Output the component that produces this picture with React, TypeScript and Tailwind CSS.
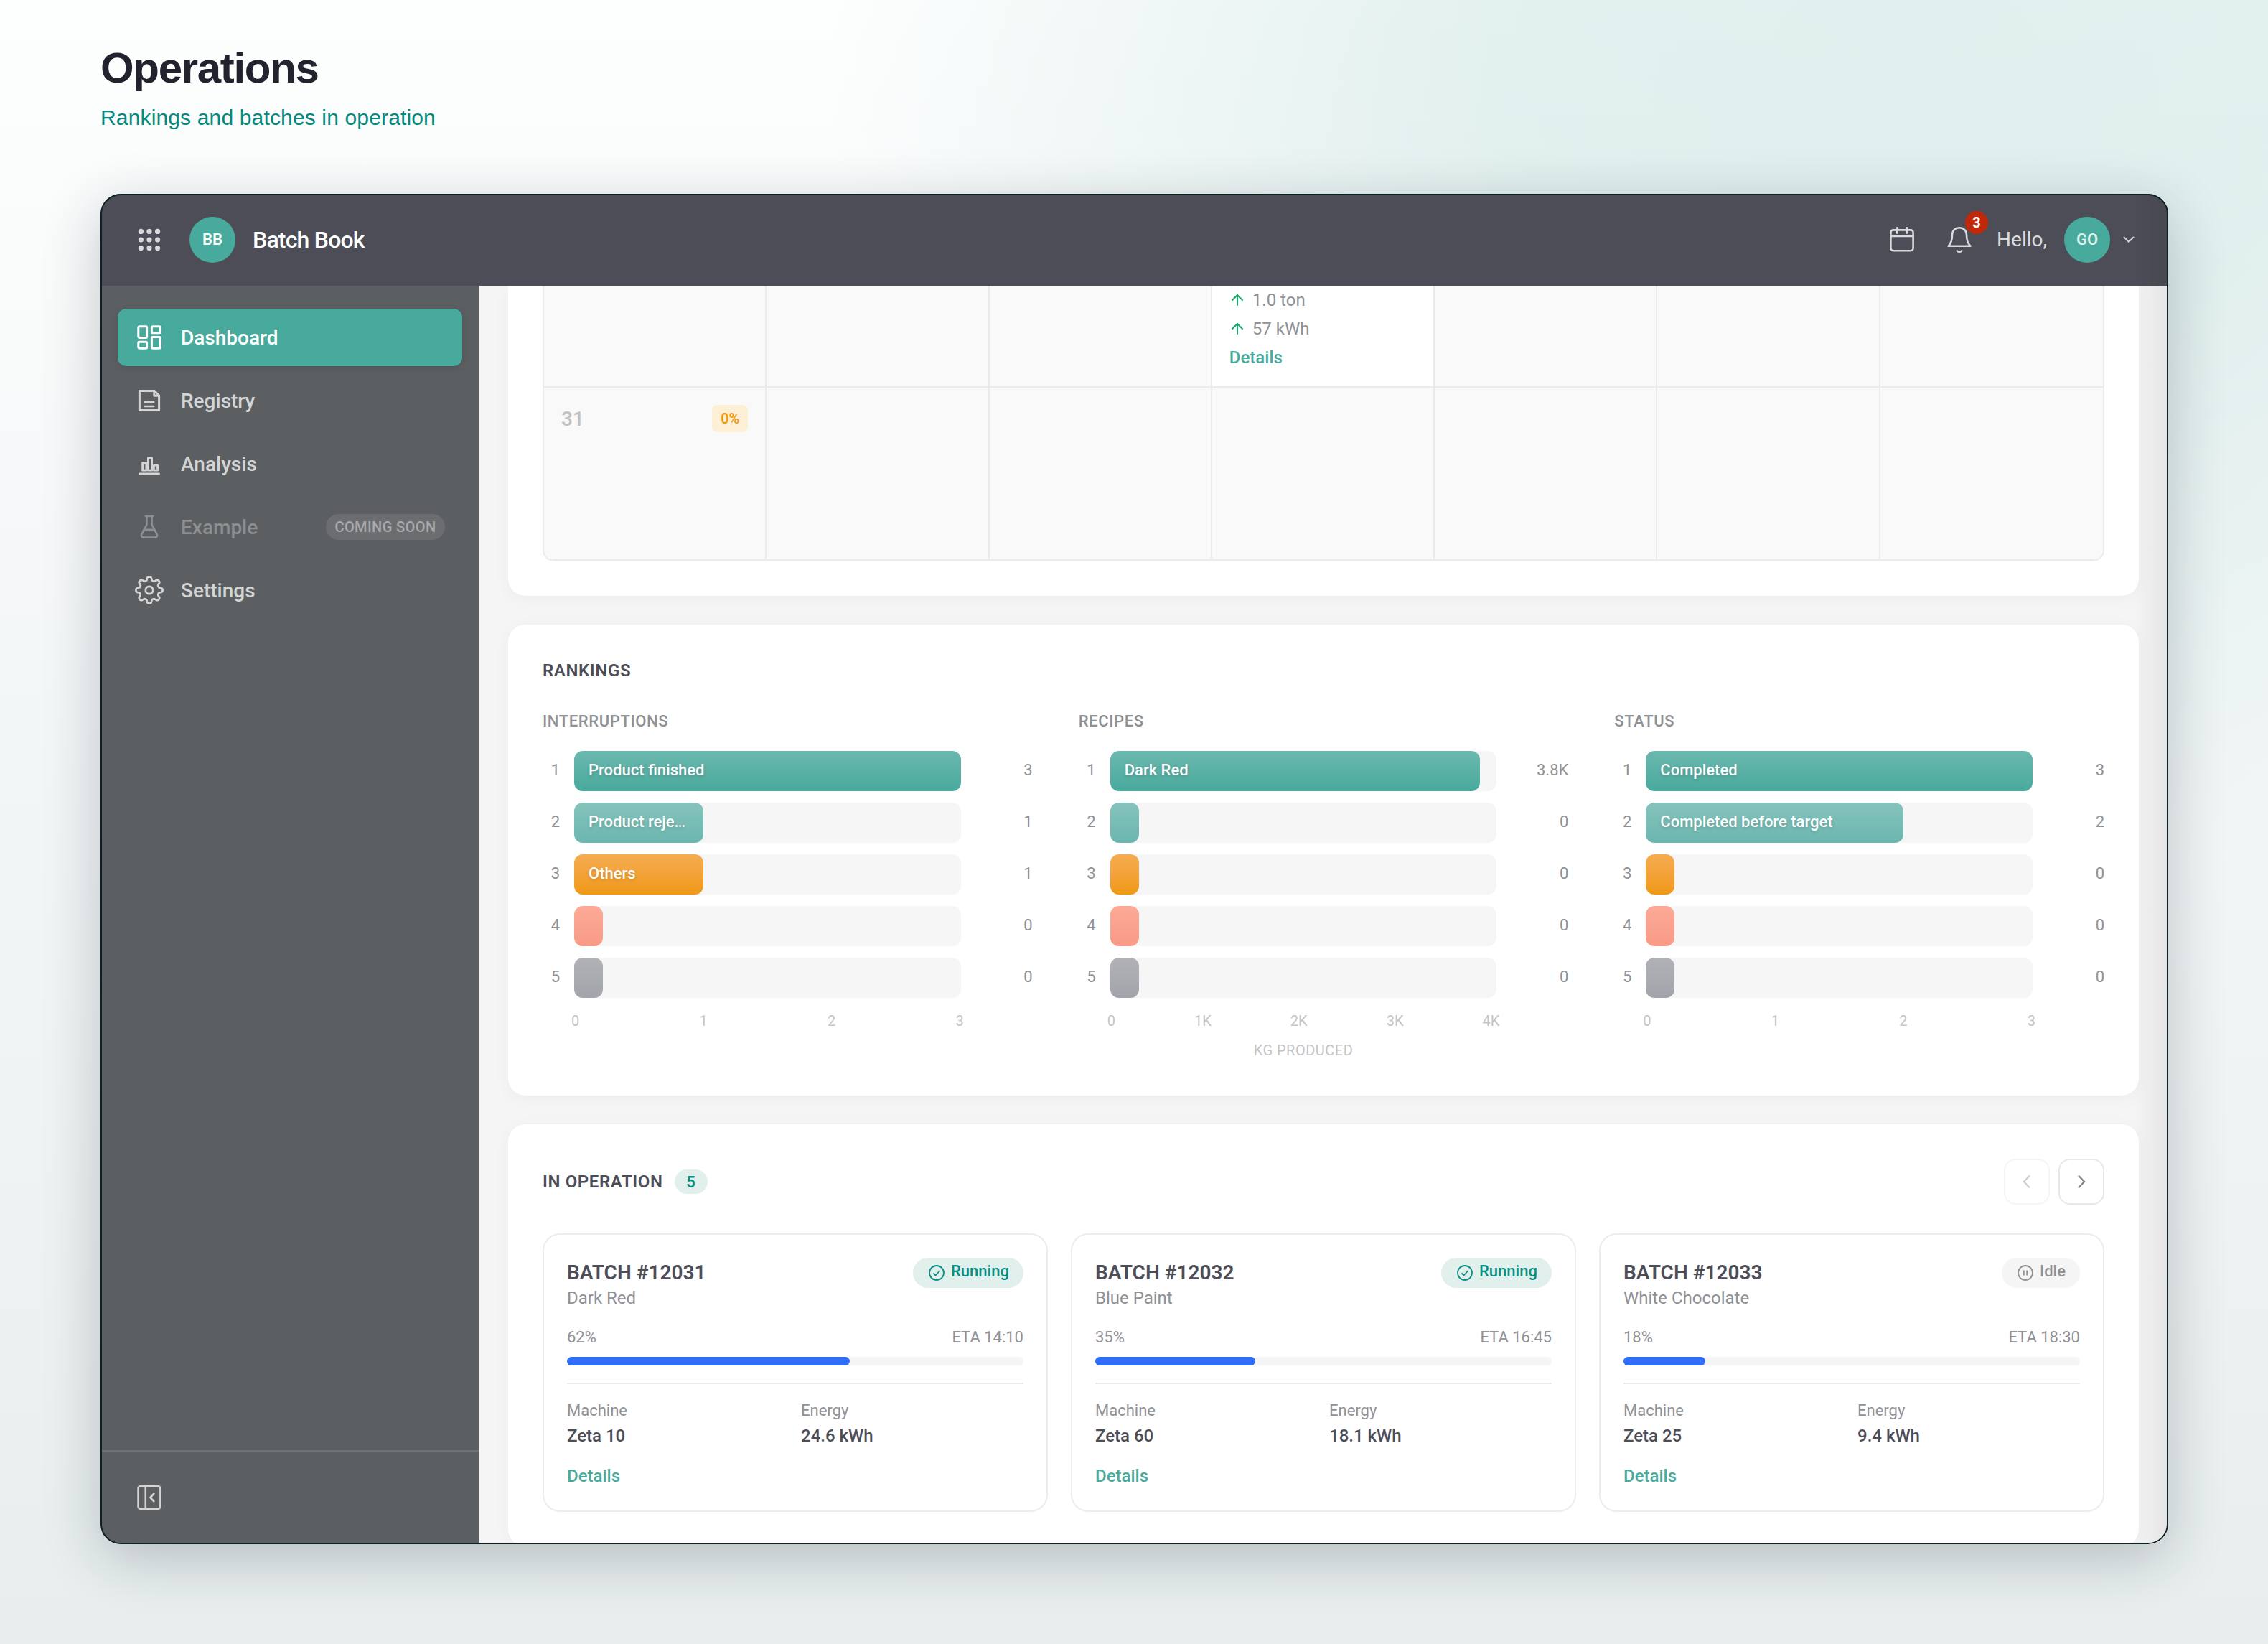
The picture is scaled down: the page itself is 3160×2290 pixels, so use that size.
import { ArrowUp } from "lucide-react";
import type { ReactNode } from "react";

const barColors = [
  "bg-linear-to-b from-[#6bb8ae] to-[#48a99d]",
  "bg-linear-to-b from-[#85c3bc] to-[#6bb6af]",
  "bg-linear-to-b from-[#f5ac50] to-[#f0980e]",
  "bg-linear-to-b from-[#fcaa98] to-[#f89a86]",
  "bg-linear-to-b from-[#b0b2b6] to-[#a1a4aa]",
];

interface RankingRow {
  label?: string;
  value: string;
  percent: number;
}

interface Ranking {
  title: string;
  rows: RankingRow[];
  ticks: string[];
  unit?: string;
}

const empty: RankingRow = { value: "0", percent: 0 };

const rankings: Ranking[] = [
  {
    title: "INTERRUPTIONS",
    rows: [
      { label: "Product finished", value: "3", percent: 100 },
      { label: "Product reje…", value: "1", percent: 33.33 },
      { label: "Others", value: "1", percent: 33.33 },
      empty,
      empty,
    ],
    ticks: ["0", "1", "2", "3"],
  },
  {
    title: "RECIPES",
    rows: [{ label: "Dark Red", value: "3.8K", percent: 95.75 }, empty, empty, empty, empty],
    ticks: ["0", "1K", "2K", "3K", "4K"],
    unit: "KG PRODUCED",
  },
  {
    title: "STATUS",
    rows: [
      { label: "Completed", value: "3", percent: 100 },
      { label: "Completed before target", value: "2", percent: 66.67 },
      empty,
      empty,
      empty,
    ],
    ticks: ["0", "1", "2", "3"],
  },
];

interface Batch {
  id: string;
  recipe: string;
  status: "Running" | "Idle";
  progress: number;
  eta: string;
  machine: string;
  energy: string;
}

const batches: Batch[] = [
  { id: "12031", recipe: "Dark Red", status: "Running", progress: 62, eta: "14:10", machine: "Zeta 10", energy: "24.6 kWh" },
  { id: "12032", recipe: "Blue Paint", status: "Running", progress: 35, eta: "16:45", machine: "Zeta 60", energy: "18.1 kWh" },
  { id: "12033", recipe: "White Chocolate", status: "Idle", progress: 18, eta: "18:30", machine: "Zeta 25", energy: "9.4 kWh" },
];

// eight rounded teeth around the centre of a 20x20 box
const gearPath = `M${Array.from({ length: 160 }, (_, i) => {
  const angle = (i / 160) * Math.PI * 2;
  const radius = 8.05 + 1.3 * Math.tanh(1.8 * Math.cos(8 * angle));
  return `${(10 + radius * Math.cos(angle)).toFixed(2)} ${(10 + radius * Math.sin(angle)).toFixed(2)}`;
}).join("L")}z`;

interface IconProps {
  children: ReactNode;
  className?: string;
  strokeWidth?: number;
}

function Icon({ children, className = "size-10", strokeWidth = 1.5 }: IconProps) {
  return (
    <svg
      viewBox="0 0 20 20"
      className={`shrink-0 ${className}`}
      fill="none"
      stroke="currentColor"
      strokeWidth={strokeWidth}
      strokeLinecap="round"
      strokeLinejoin="round"
    >
      {children}
    </svg>
  );
}

const dashboardIcon = (
  <Icon>
    <rect x="2.4" y="2.4" width="5.9" height="7.8" rx="0.7" />
    <rect x="11.7" y="2.4" width="5.9" height="4.5" rx="0.7" />
    <rect x="2.4" y="13.1" width="5.9" height="4.5" rx="0.7" />
    <rect x="11.7" y="9.8" width="5.9" height="7.8" rx="0.7" />
  </Icon>
);

const registryIcon = (
  <Icon>
    <path d="M3.2 3.2h10.3l3.3 3.3v10.3H3.2z" />
    <path d="M13.4 3.2v3.4h3.4" />
    <path d="M6.7 11h6.4M6.7 14h6.4" strokeWidth="1.3" />
  </Icon>
);

const analysisIcon = (
  <Icon>
    <path d="M3.2 17h13.6" strokeWidth="1.4" />
    <path d="M5.3 9.3h2.6v5.3H5.3zM9.2 5.9h2.6v8.7H9.2zM13.2 11.1h2.6v3.5h-2.6z" strokeWidth="1.4" />
  </Icon>
);

const flaskIcon = (
  <Icon strokeWidth={1.3}>
    <path d="M7.4 2.5h5.2" />
    <path d="M8.2 2.5v6l-3.5 6.6c-.6 1.2.1 2.2 1.3 2.2h8c1.2 0 1.9-1 1.3-2.2l-3.5-6.6v-6" />
    <path d="M6.2 11.9h7.6" />
  </Icon>
);

const settingsIcon = (
  <Icon strokeWidth={1.4}>
    <circle cx="10" cy="10" r="2.6" />
    <path d={gearPath} />
  </Icon>
);

const navItems = [
  { label: "Dashboard", icon: dashboardIcon, active: true },
  { label: "Registry", icon: registryIcon },
  { label: "Analysis", icon: analysisIcon },
  { label: "Example", icon: flaskIcon, soon: true },
  { label: "Settings", icon: settingsIcon },
];

function Header() {
  return (
    <header className="flex h-32 items-center bg-[#4d4d57] pr-[29px] pl-9 text-[#dadadd]">
      <div className="flex size-16 items-center justify-center">
        <svg viewBox="0 0 40 40" className="size-10" fill="currentColor">
          {[8.4, 20, 31.6].map((y) =>
            [8.4, 20, 31.6].map((x) => <circle key={`${x}-${y}`} cx={x} cy={y} r="3.6" />),
          )}
        </svg>
      </div>
      <div className="ml-6 flex size-16 items-center justify-center rounded-full bg-[#48aa9d] pb-0.5 font-semibold text-[22px] text-white">
        BB
      </div>
      <h1 className="ml-6 font-medium text-[32px] text-white tracking-tight">Batch Book</h1>

      <div className="ml-auto flex items-center">
        <div className="flex size-16 items-center justify-center">
          <Icon strokeWidth={1.3}>
            <rect x="2.2" y="3.2" width="15.6" height="14.4" rx="1.7" />
            <path d="M2.2 7.5h15.6M6.6 1.7v3.6M13.4 1.7v3.6" />
          </Icon>
        </div>
        <div className="relative ml-4 flex size-16 items-center justify-center">
          <Icon strokeWidth={1.3}>
            <path d="M10 1.6c-3.2 0-5 2.3-5 5.2 0 3.6-.7 5.6-2.7 7.6h15.4c-2-2-2.7-4-2.7-7.6 0-2.9-1.8-5.2-5-5.2z" />
            <path d="M8.4 17.7c.5.9 2.7.9 3.2 0" />
          </Icon>
          <span className="absolute -top-2 -right-2 flex size-8 items-center justify-center rounded-full bg-[#c0280a] font-bold text-[20px] text-white leading-none">
            3
          </span>
        </div>
        <span className="ml-5 text-[28px]">Hello,</span>
        <div className="ml-6 flex size-16 items-center justify-center rounded-full bg-[#48aa9d] pb-0.5 font-semibold text-[22px] text-[#dcf0ec]">
          GO
        </div>
        <svg viewBox="0 0 16 10" className="mx-4.5 h-2.5 w-4" fill="none" stroke="currentColor" strokeWidth="1.8">
          <path d="M1 1l7 7 7-7" />
        </svg>
      </div>
    </header>
  );
}

function Sidebar() {
  return (
    <aside className="flex w-132 shrink-0 flex-col bg-[#5b5f61] text-[#d3d4d5]">
      <nav className="flex flex-1 flex-col gap-2 px-6 pt-8">
        {navItems.map((item) => (
          <div
            key={item.label}
            className={`flex h-20 items-center rounded-xl px-6 ${
              item.active ? "bg-[#48aa9d] text-white shadow-[0_2px_8px_rgba(0,0,0,0.12)]" : item.soon ? "text-[#8d9092]" : ""
            }`}
          >
            {item.icon}
            <span className="ml-6 pt-0.5 font-medium text-[28px]">{item.label}</span>
            {item.soon && (
              <span className="ml-auto flex h-9 w-[166px] items-center justify-center rounded-full bg-[#6c6d71] font-medium text-[#a9aaac] text-[20px] tracking-[0.02em]">
                COMING SOON
              </span>
            )}
          </div>
        ))}
      </nav>
      <div className="flex h-[131px] items-center border-[#6d7173] border-t-2 px-12">
        <Icon className="mb-px size-10" strokeWidth={1.3}>
          <rect x="2.3" y="2.1" width="15.4" height="15.8" rx="1.5" />
          <path d="M7.4 2.1v15.8M13.2 7.3L10.7 10l2.5 2.7" />
        </Icon>
      </div>
    </aside>
  );
}

function Calendar() {
  return (
    <section className="shrink-0 rounded-b-3xl bg-white px-12 pb-12 shadow-[0_4px_24px_rgba(0,0,0,0.04)]">
      <div className="overflow-hidden rounded-b-2xl border-2 border-[#ebebeb] border-t-0">
        <div className="grid h-[142px] grid-cols-7">
          {[0, 1, 2, 3, 4, 5, 6].map((day) => (
            <div
              key={day}
              className={`border-[#ebebeb] border-b-2 px-6 text-[24px] leading-10 ${day < 6 ? "border-r-2" : ""} ${
                day === 3 ? "bg-white" : "bg-[#f9f9f9]"
              }`}
            >
              {day === 3 && (
                <>
                  {["1.0 ton", "57 kWh"].map((text) => (
                    <div key={text} className="flex items-center gap-2 text-[#8f9195]">
                      <ArrowUp className="-ml-px mr-px text-[#12a566]" size={24} strokeWidth={1.9} />
                      {text}
                    </div>
                  ))}
                  <div className="font-medium text-[#48aa9d]">Details</div>
                </>
              )}
            </div>
          ))}
        </div>
        <div className="grid h-60 grid-cols-7">
          {[0, 1, 2, 3, 4, 5, 6].map((day) => (
            <div
              key={day}
              className={`border-[#ebebeb] border-b-2 bg-[#f9f9f9] p-6 ${day < 6 ? "border-r-2" : ""}`}
            >
              {day === 0 && (
                <div className="flex items-center justify-between">
                  <span className="pt-0.5 font-medium text-[#c0c1c2] text-[28px] leading-none">31</span>
                  <span className="flex h-[38px] w-[50px] items-center justify-center rounded-lg bg-[#fdeed6] font-semibold text-[#f29a05] text-[20px]">
                    0%
                  </span>
                </div>
              )}
            </div>
          ))}
        </div>
      </div>
    </section>
  );
}

function RankingChart({ ranking }: { ranking: Ranking }) {
  return (
    <div>
      <h3 className="font-medium text-[#8f9195] text-[22px] leading-[30px] tracking-[0.028em]">{ranking.title}</h3>
      <div className="mt-[26px] flex flex-col gap-4">
        {ranking.rows.map((row, i) => (
          <div key={i} className="grid grid-cols-[24px_1fr_80px] gap-5 text-[#8f9195] text-[22px] leading-[54px]">
            <span className="text-right">{i + 1}</span>
            <div className="h-14 rounded-xl bg-[#f6f6f6]">
              <div
                className={`h-14 min-w-10 rounded-xl ${barColors[i]} ${row.label ? "px-5" : ""}`}
                style={{ width: `${row.percent}%` }}
              >
                <div className="whitespace-nowrap font-medium text-white [text-shadow:0_2px_4px_rgba(0,0,0,0.15)]">
                  {row.label}
                </div>
              </div>
            </div>
            <span className="text-right">{row.value}</span>
          </div>
        ))}
      </div>
      <div className="mt-5 mr-24 ml-10 flex justify-between text-[#c4c5c6] text-[20px] leading-6">
        {ranking.ticks.map((tick) => (
          <span key={tick}>{tick}</span>
        ))}
      </div>
      <div className="mt-[17px] mr-25 ml-11 h-6 text-center text-[#c4c5c6] text-[20px] leading-6 tracking-wide">
        {ranking.unit}
      </div>
    </div>
  );
}

function Rankings() {
  return (
    <section className="h-[656px] shrink-0 rounded-3xl bg-white p-12 shadow-[0_4px_24px_rgba(0,0,0,0.04)]">
      <h2 className="font-semibold text-[#4d4d57] text-[24px] leading-8 tracking-wide">RANKINGS</h2>
      <div className="mt-10 grid grid-cols-3 gap-16">
        {rankings.map((ranking) => (
          <RankingChart key={ranking.title} ranking={ranking} />
        ))}
      </div>
    </section>
  );
}

function BatchCard({ batch }: { batch: Batch }) {
  const running = batch.status === "Running";

  return (
    <article className="h-[388px] rounded-3xl border-2 border-[#ececec] p-8 text-[#8f9195]">
      <div className="flex items-start justify-between">
        <div>
          <h3 className="font-semibold text-[#4d4d57] text-[28px] leading-[41px]">BATCH #{batch.id}</h3>
          <p className="text-[24px] leading-[30px]">{batch.recipe}</p>
        </div>
        <span
          className={`flex h-[42px] items-center gap-2 rounded-full pr-5 pl-[21px] font-medium text-[22px] ${
            running ? "w-[154px] bg-[#e1f0ec] text-[#0a8f82]" : "bg-[#f5f5f5]"
          }`}
        >
          <svg viewBox="0 0 24 24" className="size-6" fill="none" stroke="currentColor" strokeWidth="1.8">
            <circle cx="12" cy="12" r="10" />
            <path d={running ? "M7.5 12.5l3 3 6-6.5" : "M9.8 8.5v7M14.2 8.5v7"} />
          </svg>
          <span className="pb-1.5">{batch.status}</span>
        </span>
      </div>
      <div className="mt-[26px] flex justify-between text-[22px] leading-7">
        <span>{batch.progress}%</span>
        <span>ETA {batch.eta}</span>
      </div>
      <div className="mt-[13px] h-3 rounded-md bg-[#f5f5f5]">
        <div className="h-3 rounded-md bg-[#306ef8]" style={{ width: `${batch.progress}%` }} />
      </div>
      <div className="mt-6 grid grid-cols-2 gap-4 border-[#ebebeb] border-t-2 pt-[25px]">
        {[
          ["Machine", batch.machine],
          ["Energy", batch.energy],
        ].map(([name, value]) => (
          <div key={name}>
            <div className="text-[22px] leading-6">{name}</div>
            <div className="mt-[7px] font-medium text-[#4d4d57] text-[24px] leading-8">{value}</div>
          </div>
        ))}
      </div>
      <div className="mt-6 font-medium text-[#48aa9d] text-[24px] leading-8">Details</div>
    </article>
  );
}

function InOperation() {
  return (
    <section className="h-[588px] shrink-0 rounded-3xl bg-white p-12 shadow-[0_4px_24px_rgba(0,0,0,0.04)]">
      <div className="flex h-16 items-center">
        <h2 className="font-semibold text-[#4d4d57] text-[24px] tracking-wide">IN OPERATION</h2>
        <span className="ml-4 flex h-[34px] w-[46px] items-center justify-center rounded-full bg-[#e1f0ec] font-semibold text-[#0a8f82] text-[22px]">
          5
        </span>
        <div className="ml-auto flex gap-3 text-[#85878b]">
          <button type="button" className="flex size-16 items-center justify-center rounded-2xl border-2 border-[#e8e8e8] opacity-40">
            <svg viewBox="0 0 12 20" className="h-5 w-3" fill="none" stroke="currentColor" strokeWidth="2.4">
              <path d="M10 1.5L2 10l8 8.5" />
            </svg>
          </button>
          <button type="button" className="flex size-16 items-center justify-center rounded-2xl border-2 border-[#e8e8e8]">
            <svg viewBox="0 0 12 20" className="h-5 w-3" fill="none" stroke="currentColor" strokeWidth="2.4">
              <path d="M2 1.5l8 8.5-8 8.5" />
            </svg>
          </button>
        </div>
      </div>
      <div className="mt-10 grid grid-cols-3 gap-8">
        {batches.map((batch) => (
          <BatchCard key={batch.id} batch={batch} />
        ))}
      </div>
    </section>
  );
}

export default function App() {
  return (
    <div className="h-[2290px] w-[3160px] overflow-hidden bg-[radial-gradient(ellipse_1500px_1150px_at_84%_4%,rgba(197,226,222,0.5),rgba(197,226,222,0.47)_38%,transparent),linear-gradient(180deg,#fdfefe,#f3f6f7_45%,#e8eeee)] pl-35">
      <div className="flex h-[270px] flex-col font-['Liberation_Sans',sans-serif]">
        <div className="mt-15 font-bold text-[#23232f] text-[60px] leading-[70px] tracking-[-0.022em]">Operations</div>
        <div className="mt-4 text-[#06897e] text-[30px] leading-9 tracking-[0.15px]">Rankings and batches in operation</div>
      </div>
      <div className="relative h-[1881px] w-[2881px] overflow-clip rounded-[28px] font-[Roboto,sans-serif] shadow-[0_20px_80px_rgba(20,30,40,0.24)]">
        <Header />
        <div className="flex h-[1753px]">
          <Sidebar />
          <main className="flex flex-1 flex-col gap-10 overflow-hidden bg-[#f5f5f5] pr-[41px] pl-10">
            <Calendar />
            <Rankings />
            <InOperation />
          </main>
        </div>
        <div className="absolute inset-y-0 right-0 w-12 bg-linear-to-r from-transparent to-black/7" />
        <div className="absolute inset-0 rounded-[28px] border-2 border-[#0d2024]" />
      </div>
    </div>
  );
}
